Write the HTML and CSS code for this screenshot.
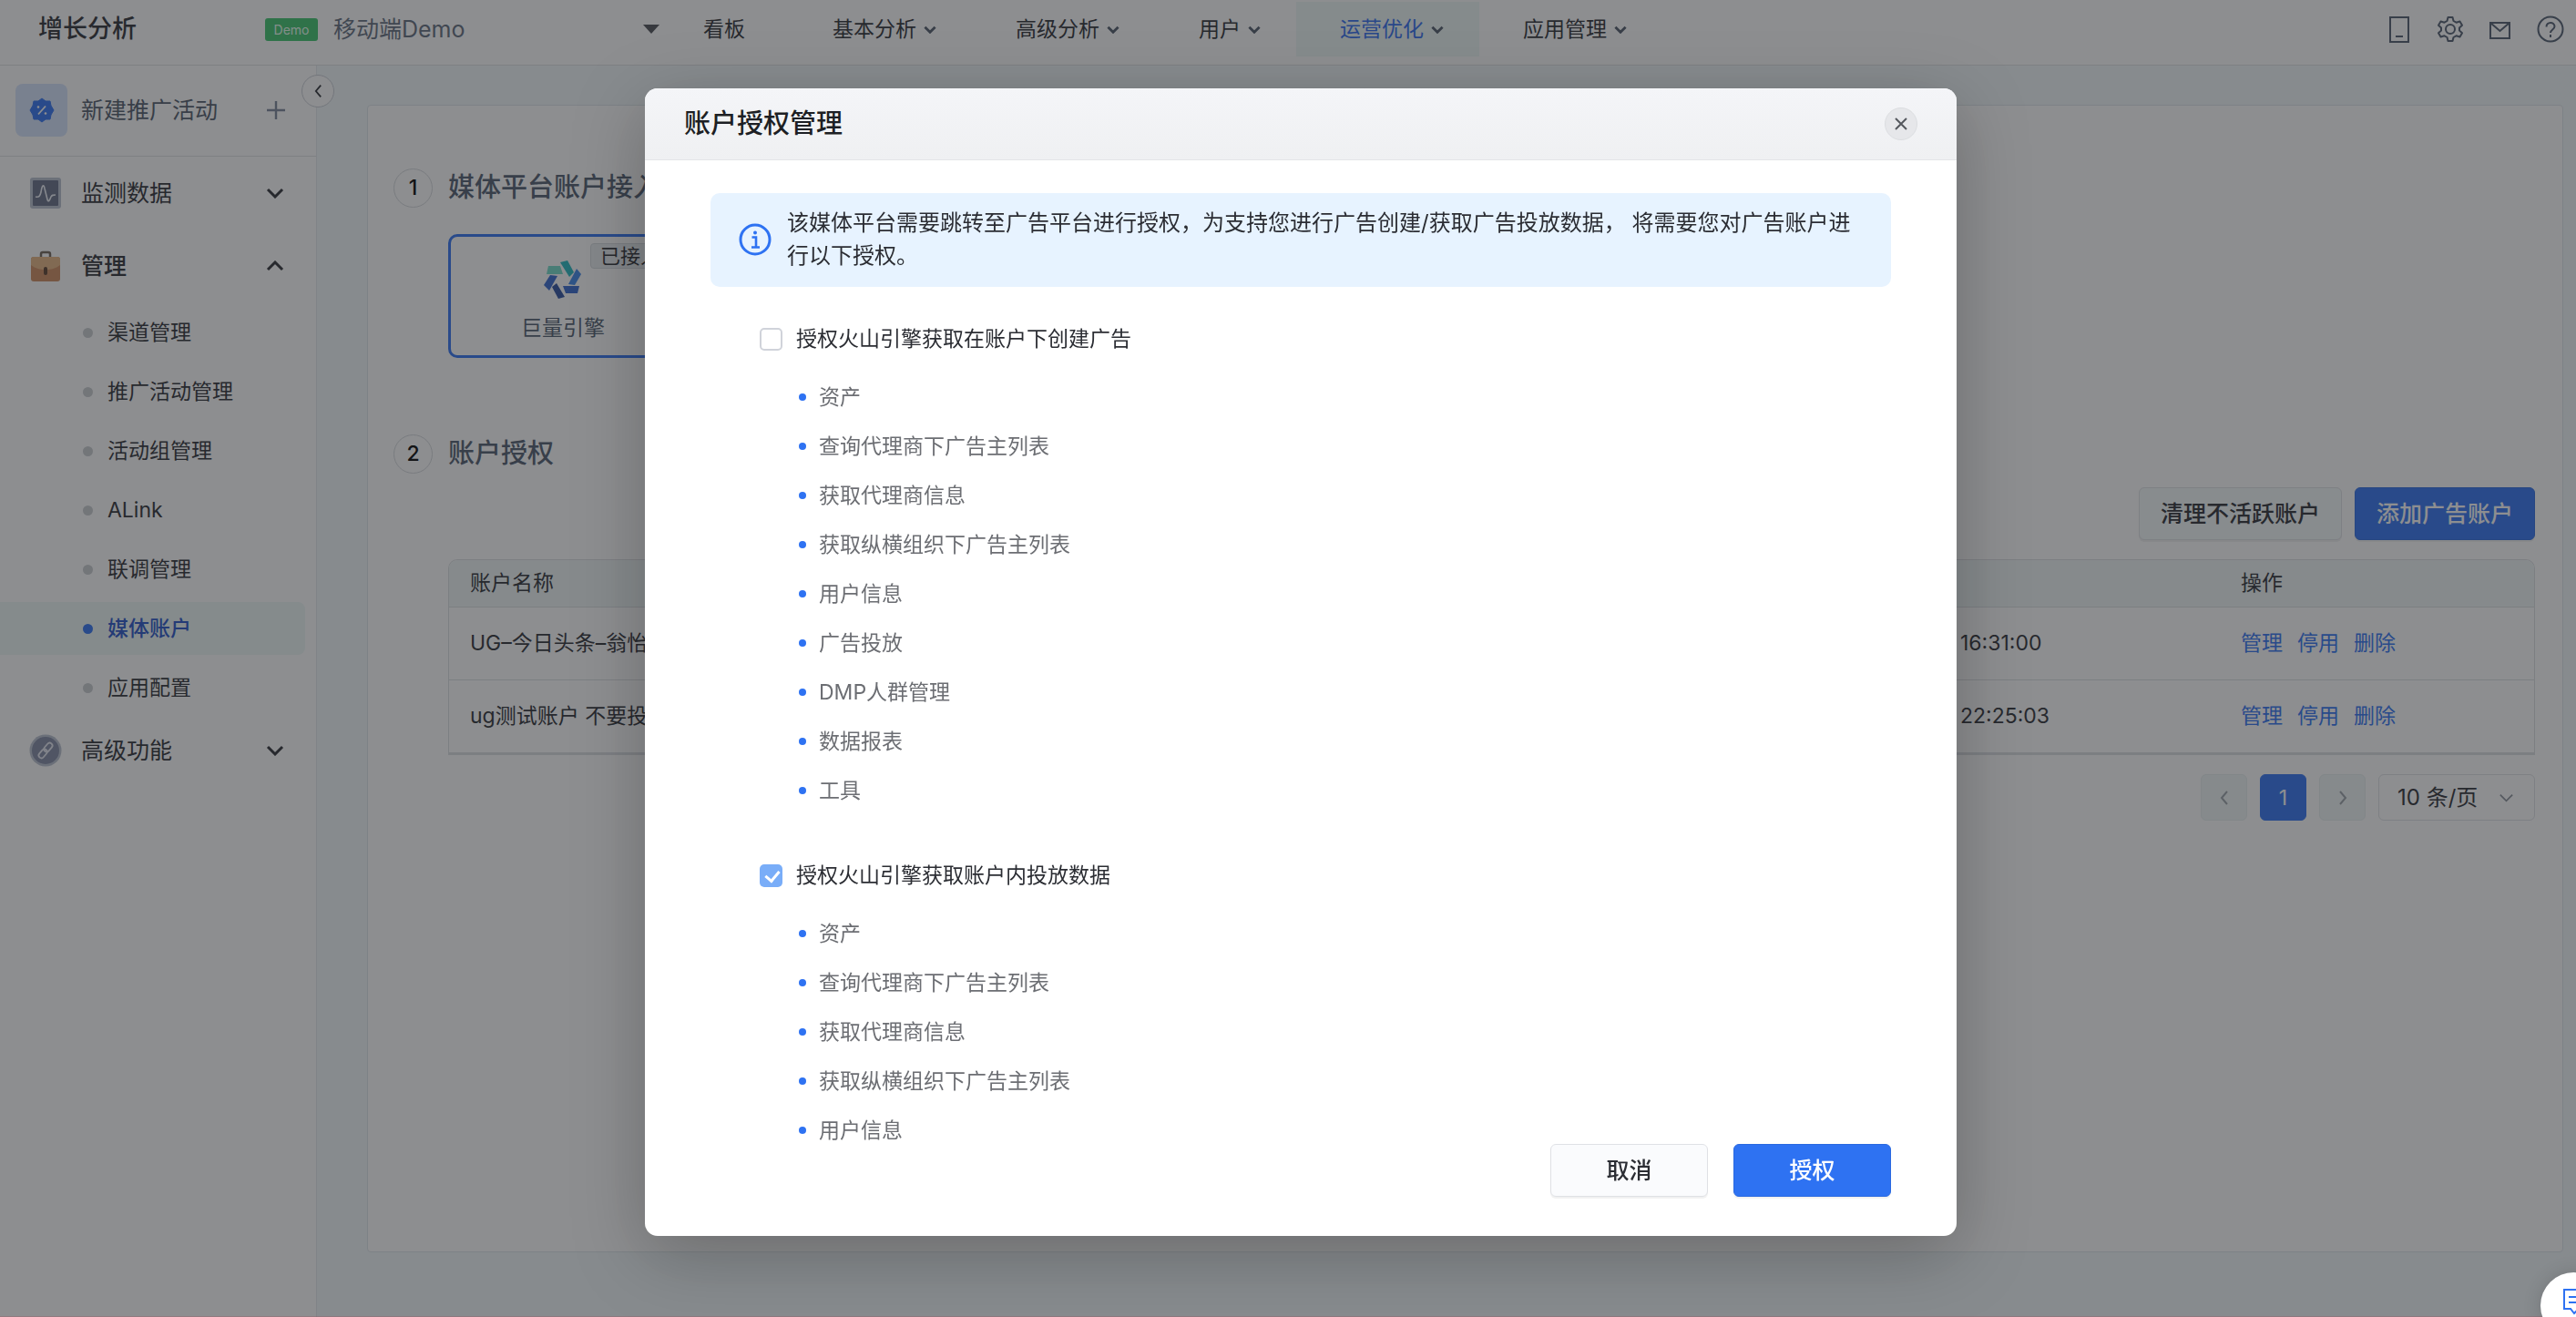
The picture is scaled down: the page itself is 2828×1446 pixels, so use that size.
FILE: index.html
```html
<!DOCTYPE html>
<html lang="zh-CN">
<head>
	<meta charset="UTF-8">
	<title>账户授权管理</title>
	<link rel="stylesheet" href="styles.css">
</head>
<body>
	<svg class="sprite" aria-hidden="true">
		<symbol id="arrow" viewBox="0 0 20 12"><path d="M2 2l8 8 8-8" fill="none" stroke="currentColor"/></symbol>
		<symbol id="side" viewBox="0 0 10 20"><path d="M8 3L2 10l6 7" fill="none" stroke="currentColor"/></symbol>
	</svg>

	<header class="header">
		<h1 class="title">增长分析</h1>
		<div class="app">
			<span class="tag">Demo</span>
			<select class="app-select" aria-label="应用">
				<option>移动端Demo</option>
			</select>
			<svg class="caret" viewBox="0 0 18 10"><path d="M0 0h18l-9 10z" fill="currentColor"/></svg>
		</div>
		<nav class="nav">
			<a href="#" class="nav-item nav-plain">看板</a>
			<a href="#" class="nav-item">基本分析<svg><use href="#arrow"/></svg></a>
			<a href="#" class="nav-item">高级分析<svg><use href="#arrow"/></svg></a>
			<a href="#" class="nav-item">用户<svg><use href="#arrow"/></svg></a>
			<a href="#" class="nav-item current">运营优化<svg><use href="#arrow"/></svg></a>
			<a href="#" class="nav-item">应用管理<svg><use href="#arrow"/></svg></a>
		</nav>
		<div class="tools">
			<a href="#" aria-label="手机"><svg viewBox="0 0 30 30" fill="none" stroke="currentColor" stroke-width="2"><path d="M4 2h20v27H4zM10 23h8"/></svg></a>
			<a href="#" aria-label="设置"><svg viewBox="0 0 30 30" fill="none" stroke="currentColor" stroke-width="2.4" stroke-linejoin="round"><path d="M12.5 2h5l1 4 3 1.700 4-1.200 2.500 4.300-3 2.700v3l3 2.700-2.500 4.300-4-1.200-3 1.700-1 4h-5l-1-4-3-1.700-4 1.200L2 19.200l3-2.700v-3l-3-2.700 2.500-4.300 4 1.200 3-1.700z"/><circle cx="15" cy="15" r="5"/></svg></a>
			<a href="#" aria-label="消息"><svg viewBox="0 0 30 30" fill="none" stroke="currentColor" stroke-width="2"><path d="M4 8h21v17H4zM4 8l10.500 9L25 8"/></svg></a>
			<a href="#" aria-label="帮助"><svg viewBox="0 0 30 30" fill="none" stroke="currentColor" stroke-width="2.400"><circle cx="15" cy="15" r="13.500"/><path d="M10.500 12.500c0-6 9-6 9-.5 0 3.500-4.500 3.500-4.500 7M15 21v3"/></svg></a>
		</div>
	</header>

	<div class="wrap">
		<aside class="sidebar">
			<a href="#" class="create">
				<span class="create-icon"><svg viewBox="0 0 28 28"><path d="M14 1l4 3 5 0 1 5 3 5-3 5-1 5-5 0-4 3-4-3-5 0-1-5-3-5 3-5 1-5 5 0z" fill="#2e72f2" stroke="#2e72f2" stroke-width="1" stroke-linejoin="round"/><path d="M18 9.500l-8 9" stroke="#fff" stroke-width="1.800"/><circle cx="10" cy="10.500" r="1.300" fill="#fff"/><circle cx="18" cy="17.500" r="1.300" fill="#fff"/></svg></span>
				<span>新建推广活动</span>
				<svg class="plus" viewBox="0 0 22 22"><path d="M11 1v20M1 11h20" stroke="currentColor" stroke-width="2.400"/></svg>
			</a>
			<a href="#" class="group">
				<svg class="group-icon" viewBox="0 0 36 36"><rect x="1" y="1" width="34" height="34" rx="3" fill="#b9c0d0"/><rect x="4" y="4" width="28" height="28" rx="1" fill="#646d87"/><path d="M7 22c4 1 5-1 6-5 1-7 3-10 4-4l3 12c1 4 3 0 4-3 1-2 2-2 5-2" fill="none" stroke="#eef1f8" stroke-width="1.600"/></svg>
				<span>监测数据</span>
				<svg class="fold"><use href="#arrow"/></svg>
			</a>
			<a href="#" class="group open">
				<svg class="group-icon" viewBox="0 0 36 36"><path d="M13 8V5q0-2 2-2h6q2 0 2 2v3" fill="none" stroke="#6f6257" stroke-width="2.500"/><rect x="2" y="8" width="32" height="27" rx="3" fill="#d08a5c"/><path d="M2 11q0-3 3-3h26q3 0 3 3v6c-5 4-10 5-16 5S7 21 2 17z" fill="#e5b581"/><rect x="16" y="19" width="4" height="9" rx="2" fill="#5a3d2b"/></svg>
				<span>管理</span>
				<svg class="fold"><use href="#arrow"/></svg>
			</a>
			<ul class="sub">
				<li><a href="#">渠道管理</a></li>
				<li><a href="#">推广活动管理</a></li>
				<li><a href="#">活动组管理</a></li>
				<li><a href="#">ALink</a></li>
				<li><a href="#">联调管理</a></li>
				<li><a href="#" class="current">媒体账户</a></li>
				<li><a href="#">应用配置</a></li>
			</ul>
			<a href="#" class="group">
				<svg class="group-icon" viewBox="0 0 36 36"><circle cx="18" cy="18" r="17.500" fill="#b9c0d0"/><circle cx="18" cy="18" r="15" fill="#7f88a3"/><g fill="none" stroke="#e6e9f2" stroke-width="1.800" transform="rotate(40 18 18)"><rect x="15" y="8" width="6" height="11" rx="3"/><rect x="15" y="17" width="6" height="11" rx="3"/></g></svg>
				<span>高级功能</span>
				<svg class="fold"><use href="#arrow"/></svg>
			</a>
			<button class="collapse" aria-label="收起"><svg><use href="#side"/></svg></button>
		</aside>

		<main class="card">
			<h2 class="step"><span class="num">1</span>媒体平台账户接入</h2>
			<div class="media">
				<span class="state">已接入</span>
				<svg class="media-logo" viewBox="0 0 42 42"><path fill="#72dcc8" d="M5 6h13l3 9H3z"/><path fill="#23b9c0" d="M18 2l8-2 7 13-5 5z"/><path fill="#3b87ea" d="M36 9l5 6-7 12-7-1z"/><path fill="#3468d0" d="M21 28h18l-2 8H24z"/><path fill="#2a4fa0" d="M14 25l9 15-7 2-7-13z"/><path fill="#3468d0" d="M7 16l8 1-9 16-6-6z"/></svg>
				<span>巨量引擎</span>
			</div>
			<h2 class="step"><span class="num">2</span>账户授权</h2>
			<div class="actions">
				<button class="btn">清理不活跃账户</button>
				<button class="btn primary">添加广告账户</button>
			</div>
			<div class="table-box">
				<table class="table">
					<thead>
						<tr><th class="col-name">账户名称</th><th></th><th class="col-op">操作</th></tr>
					</thead>
					<tbody>
						<tr>
							<td>UG–今日头条–翁怡</td>
							<td>16:31:00</td>
							<td><div class="links"><a href="#">管理</a><a href="#">停用</a><a href="#">删除</a></div></td>
						</tr>
						<tr>
							<td>ug测试账户 不要投</td>
							<td>22:25:03</td>
							<td><div class="links"><a href="#">管理</a><a href="#">停用</a><a href="#">删除</a></div></td>
						</tr>
					</tbody>
				</table>
			</div>
			<div class="pager">
				<button class="page" aria-label="上一页"><svg><use href="#side"/></svg></button>
				<button class="page current">1</button>
				<button class="page next" aria-label="下一页"><svg><use href="#side"/></svg></button>
				<div class="size">
					<select aria-label="每页条数">
						<option>10 条/页</option>
					</select>
					<svg><use href="#arrow"/></svg>
				</div>
			</div>
		</main>
	</div>

	<div class="mask">
		<section class="modal" role="dialog" aria-labelledby="modal-title">
			<div class="modal-head">
				<h2 id="modal-title">账户授权管理</h2>
				<button class="close" aria-label="关闭"><svg viewBox="0 0 16 16"><path d="M2 2l12 12M14 2L2 14" stroke="currentColor" stroke-width="2"/></svg></button>
			</div>
			<div class="modal-body">
				<div class="notice">
					<svg viewBox="0 0 36 36"><circle cx="18" cy="18" r="16" fill="none" stroke="#2e72f2" stroke-width="3"/><path d="M14.500 15.500H19V26M14 26.500h9" fill="none" stroke="#2e72f2" stroke-width="2.600"/><circle cx="18" cy="10.500" r="2" fill="#2e72f2"/></svg>
					<p>该媒体平台需要跳转至广告平台进行授权，为支持您进行广告创建/获取广告投放数据， 将需要您对广告账户进行以下授权。</p>
				</div>
				<div class="auth">
					<label class="check"><input type="checkbox">授权火山引擎获取在账户下创建广告</label>
					<ul class="scope">
						<li>资产</li>
						<li>查询代理商下广告主列表</li>
						<li>获取代理商信息</li>
						<li>获取纵横组织下广告主列表</li>
						<li>用户信息</li>
						<li>广告投放</li>
						<li>DMP人群管理</li>
						<li>数据报表</li>
						<li>工具</li>
					</ul>
				</div>
				<div class="auth">
					<label class="check"><input type="checkbox" checked>授权火山引擎获取账户内投放数据</label>
					<ul class="scope">
						<li>资产</li>
						<li>查询代理商下广告主列表</li>
						<li>获取代理商信息</li>
						<li>获取纵横组织下广告主列表</li>
						<li>用户信息</li>
					</ul>
				</div>
			</div>
			<div class="modal-foot">
				<button class="btn">取消</button>
				<button class="btn primary">授权</button>
			</div>
		</section>
	</div>

	<button class="chat" aria-label="咨询"><svg viewBox="0 0 30 30" fill="none" stroke="#2e72f2" stroke-width="3"><path d="M2 2h26v21H18l-5 5-4-5H2zM7 10h16M7 16h16"/></svg></button>
</body>
</html>
```

FILE: styles.css
```css
* {
	box-sizing: border-box;
	margin: 0;
	padding: 0;
}
ul {
	list-style: none;
}
a {
	color: inherit;
	text-decoration: none;
}
button, select, input {
	font: inherit;
	color: inherit;
}
button {
	cursor: pointer;
}
svg {
	stroke-width: 2px;
}
body {
	display: flex;
	flex-direction: column;
	min-height: 100vh;
	overflow: hidden;
	font: 400 23px/36px Inter, "Noto Sans CJK SC", sans-serif;
	color: #2b2d33;
	background: #f2f8fb;
}
.sprite {
	position: absolute;
	width: 0;
	height: 0;
}

/* 顶部 */
.header {
	display: flex;
	height: 72px;
	padding: 2px 13px 9px 42px;
	border-bottom: 1px solid #dfe1e4;
	background: #fff;
}
.title {
	width: 249px;
	font-size: 27px;
	font-weight: 500;
	line-height: 60px;
}
.app {
	display: flex;
	align-items: center;
	position: relative;
	width: 433px;
	color: #5f6b7c;
}
.tag {
	width: 58px;
	margin-right: 17px;
	border-radius: 3px;
	background: #3cc56c;
	color: #e8fff0;
	font-size: 14px;
	line-height: 25px;
	text-align: center;
}
.app-select {
	flex: 1;
	border: 0;
	background: none;
	appearance: none;
	font-size: 25px;
}
.caret {
	position: absolute;
	right: 0;
	width: 18px;
	height: 10px;
	color: #4b4f55;
}
.nav {
	display: flex;
}
.nav-item {
	display: flex;
	align-items: center;
	padding: 0 39px 0 48px;
}
.nav-item svg {
	width: 14px;
	height: 9px;
	margin-left: 8px;
	color: #4e5969;
	stroke-width: 4px;
}
.nav-plain {
	padding: 0 48px;
}
.nav-item.current {
	background: #eef8f7;
	color: #2e6cf0;
}
.tools {
	display: flex;
	align-items: center;
	gap: 25px;
	margin-left: auto;
	color: #4e5b6e;
}
.tools a, .tools svg {
	display: block;
	width: 30px;
	height: 30px;
}

/* 左侧菜单 */
.wrap {
	display: flex;
	flex: 1;
}
.sidebar {
	position: relative;
	width: 348px;
	border-right: 1px solid #e3e8ec;
	background: #fff;
	font-size: 25px;
}
.create {
	display: flex;
	align-items: center;
	height: 100px;
	padding: 0 33px 2px 17px;
	border-bottom: 1px solid #dfe1e4;
	color: #4e5969;
}
.create-icon {
	display: flex;
	align-items: center;
	justify-content: center;
	width: 57px;
	height: 58px;
	margin-right: 15px;
	border-radius: 8px;
	background: #d5e3fd;
}
.create-icon svg {
	width: 28px;
	height: 28px;
}
.plus {
	width: 22px;
	height: 22px;
	margin-left: auto;
	color: #7a8599;
}
.group {
	display: flex;
	align-items: center;
	height: 80px;
	padding: 0 35px 0 32px;
}
.group-icon {
	width: 36px;
	height: 36px;
	margin-right: 21px;
}
.fold {
	width: 20px;
	height: 12px;
	margin-left: auto;
	stroke-width: 3px;
}
.open {
	font-weight: 500;
}
.open .fold {
	transform: rotate(180deg);
}
.sub {
	display: flex;
	flex-direction: column;
	gap: 7px;
	padding: 4px 12px 0 0;
	font-size: 23px;
}
.sub a {
	display: flex;
	align-items: center;
	height: 58px;
	padding-left: 91px;
	border-radius: 0 8px 8px 0;
}
.sub a:before {
	content: '';
	width: 11px;
	height: 11px;
	margin-right: 16px;
	border-radius: 50%;
	background: #c9cdd0;
}
.sub .current {
	background: #eef8f7;
	color: #2453c8;
	font-weight: 500;
}
.sub .current:before {
	background: #2e72f2;
}
.collapse {
	display: flex;
	align-items: center;
	justify-content: center;
	position: absolute;
	top: 10px;
	right: -20px;
	width: 36px;
	height: 36px;
	border: 1px solid #c9cdd4;
	border-radius: 50%;
	background: #fff;
}
.collapse svg {
	width: 9px;
	height: 18px;
}

/* 内容区 */
.card {
	flex: 1;
	margin: 43px 14px 71px 55px;
	padding: 68px 30px 30px 28px;
	border: 1px solid #dde6ea;
	border-radius: 4px;
	background: #fff;
}
.step {
	display: flex;
	align-items: center;
	gap: 17px;
	height: 44px;
	color: #4e5b6e;
	font-size: 29px;
	font-weight: 500;
}
.num {
	width: 43px;
	border: 1px solid #d5d8dc;
	border-radius: 50%;
	color: #000;
	font-size: 23px;
	line-height: 41px;
	text-align: center;
}
.media {
	display: flex;
	flex-direction: column;
	align-items: center;
	position: relative;
	width: 252px;
	height: 136px;
	margin: 29px 0 83px 60px;
	padding-top: 26px;
	border: 3px solid #2e72f2;
	border-radius: 10px;
	color: #4e5b6e;
}
.media-logo {
	width: 42px;
	height: 42px;
	margin-bottom: 14px;
}
.state {
	position: absolute;
	top: 7px;
	right: 5px;
	padding: 0 10px;
	border: 1px solid #d5dade;
	border-radius: 4px;
	background: #e9eef1;
	color: #2b2d33;
	font-size: 22px;
	line-height: 26px;
}
.actions {
	display: flex;
	justify-content: flex-end;
	gap: 14px;
	margin: 15px 0 21px;
}
.btn {
	height: 58px;
	padding: 0 23px;
	border: 1px solid #dfe1e5;
	border-radius: 6px;
	background: #fafbfd;
	box-shadow: 0 2px 1px rgba(0,0,0,.06);
	font-size: 25px;
	font-weight: 500;
}
.actions .btn {
	background: #f5fafa;
}
.actions .primary, .btn.primary {
	border-color: #2a69e0;
	background: #2e72f2;
	color: #fff;
}
.table-box {
	margin-left: 60px;
	border: 1px solid #dcdfe2;
	border-bottom-width: 3px;
	border-radius: 10px 10px 0 0;
	overflow: hidden;
}
.table {
	width: 100%;
	border-collapse: collapse;
	table-layout: fixed;
	text-align: left;
}
.table th {
	height: 51px;
	padding: 0 23px;
	background: #f0f7f7;
	font-weight: 400;
}
.table td {
	height: 80px;
	padding: 0 23px;
	border-top: 1px solid #dcdfe2;
}
.table .col-name {
	width: 1636px;
}
.table .col-op {
	width: 345px;
}
.links {
	display: flex;
	gap: 16px;
	color: #2e72f2;
}
.pager {
	display: flex;
	justify-content: flex-end;
	gap: 14px;
	margin-top: 21px;
}
.page {
	display: flex;
	align-items: center;
	justify-content: center;
	width: 51px;
	height: 51px;
	border: 1px solid #e8eeee;
	border-radius: 6px;
	background: #f0f7f7;
	color: #9aa1a8;
}
.page svg {
	width: 10px;
	height: 20px;
}
.page.current {
	border-color: #2e72f2;
	background: #2e72f2;
	color: #fff;
}
.next svg {
	transform: rotate(180deg);
}
.size {
	display: flex;
	align-items: center;
	position: relative;
}
.size select {
	width: 172px;
	height: 51px;
	padding-left: 20px;
	border: 1px solid #dfe1e5;
	border-radius: 6px;
	background: #fff;
	appearance: none;
	font-size: 24px;
}
.size svg {
	position: absolute;
	right: 23px;
	width: 17px;
	height: 10px;
	color: #8a9099;
}

/* 弹窗 */
.mask {
	display: flex;
	justify-content: center;
	position: fixed;
	top: 0;
	right: 0;
	bottom: 0;
	left: 0;
	padding: 97px 0 88px 28px;
	border-bottom: 1px solid rgba(150,80,90,.3);
	background: rgba(36,38,42,.52);
}
.modal {
	display: flex;
	flex-direction: column;
	width: 100%;
	max-width: 1440px;
	border-radius: 14px;
	overflow: hidden;
	background: #fff;
	box-shadow: 0 20px 80px rgba(0,0,0,.25);
}
.modal-head {
	display: flex;
	align-items: center;
	justify-content: space-between;
	height: 79px;
	padding: 0 43px;
	border-bottom: 1px solid #e3e5e8;
	background: linear-gradient(#f4f5f8, #eff0f2);
}
.modal-head h2 {
	color: #1d1f24;
	font-size: 29px;
	font-weight: 500;
}
.close {
	display: flex;
	align-items: center;
	justify-content: center;
	width: 36px;
	height: 36px;
	border: 1px solid #dcdee1;
	border-radius: 50%;
	background: #e6e7ea;
	color: #55585e;
}
.close svg {
	width: 16px;
	height: 16px;
}
.modal-body {
	flex: 1;
	padding: 36px 72px 0;
}
.notice {
	display: flex;
	align-items: center;
	gap: 17px;
	margin-bottom: 39px;
	padding: 15px 36px 16px 31px;
	border-radius: 10px;
	background: #e7f3ff;
	font-size: 24px;
}
.notice svg {
	flex: none;
	width: 36px;
	height: 36px;
}
.auth {
	margin-bottom: 63px;
	padding-left: 54px;
}
.auth:last-child {
	margin-bottom: 0;
}
.check {
	display: flex;
	align-items: center;
	gap: 15px;
	margin-bottom: 34px;
}
.check input {
	width: 25px;
	height: 25px;
	border: 2px solid #d0d3da;
	border-radius: 5px;
	background: #fff;
	appearance: none;
}
.check input:checked {
	border: 0;
	background: #79adf8;
}
.check input:checked:before {
	content: '';
	display: block;
	width: 7px;
	height: 12px;
	margin: 4px 9px;
	border: solid #fff;
	border-width: 0 3px 3px 0;
	transform: rotate(40deg);
}
.scope {
	display: flex;
	flex-direction: column;
	gap: 30px;
	padding-left: 43px;
	color: #6c6e73;
	line-height: 24px;
}
.scope li {
	display: flex;
	align-items: center;
}
.scope li:before {
	content: '';
	width: 8px;
	height: 8px;
	margin-right: 14px;
	border-radius: 50%;
	background: #2e72f2;
}
.modal-foot {
	display: flex;
	justify-content: flex-end;
	gap: 28px;
	padding: 0 72px 43px;
}
.modal-foot .btn {
	width: 173px;
}

.chat {
	position: fixed;
	right: -34px;
	bottom: -24px;
	width: 73px;
	height: 73px;
	padding-left: 24px;
	border: 0;
	border-radius: 50%;
	background: #fff;
	box-shadow: 0 0 20px rgba(0,0,0,.15);
	text-align: left;
}
.chat svg {
	width: 30px;
	height: 30px;
}
```
